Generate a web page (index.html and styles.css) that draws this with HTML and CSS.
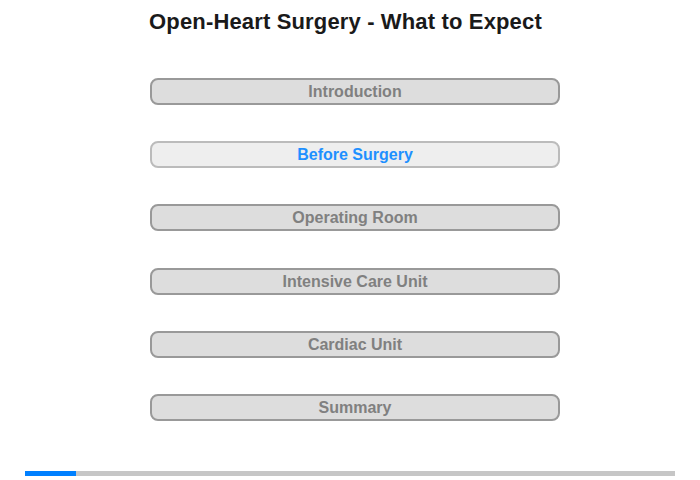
FILE: index.html
```html
<!DOCTYPE html>
<html>
<head>
<meta charset="utf-8">
<link rel="stylesheet" href="styles.css">
</head>
<body>
<div class="page">
  <h1 class="title">Open-Heart Surgery - What to Expect</h1>
  <nav class="menu">
    <div class="item">Introduction</div>
    <div class="item active">Before Surgery</div>
    <div class="item">Operating Room</div>
    <div class="item">Intensive Care Unit</div>
    <div class="item">Cardiac Unit</div>
    <div class="item">Summary</div>
  </nav>
  <div class="progress"><div class="progress-fill" style="width:51px"></div></div>
</div>
</body>
</html>
```
FILE: styles.css
```css
html, body {
  margin: 0;
  padding: 0;
  background: #ffffff;
}
body {
  font-family: "Liberation Sans", Arial, sans-serif;
  width: 700px;
  height: 480px;
  overflow: hidden;
}
.page {
  display: flex;
  flex-direction: column;
}
.title {
  width: 691px;
  margin: 9px 0 0 0;
  font-size: 22px;
  line-height: 25px;
  font-weight: bold;
  color: #1a1a1a;
  text-align: center;
  letter-spacing: 0.15px;
}
.menu {
  margin: 44px 0 0 150px;
  display: flex;
  flex-direction: column;
  gap: 36.2px;
}
.item {
  box-sizing: border-box;
  width: 410px;
  height: 27px;
  border: 2px solid #999999;
  border-radius: 8px;
  background: #dddddd;
  color: #808080;
  font-size: 16px;
  font-weight: bold;
  line-height: 23px;
  text-align: center;
}
.item.active {
  background: #eeeeee;
  border-color: #bbbbbb;
  color: #1e90ff;
}
.progress {
  margin: 50px 0 0 25px;
  width: 650px;
  height: 5px;
  background: #c6c6c6;
}
.progress-fill {
  height: 100%;
  background: #0080ff;
}
```
